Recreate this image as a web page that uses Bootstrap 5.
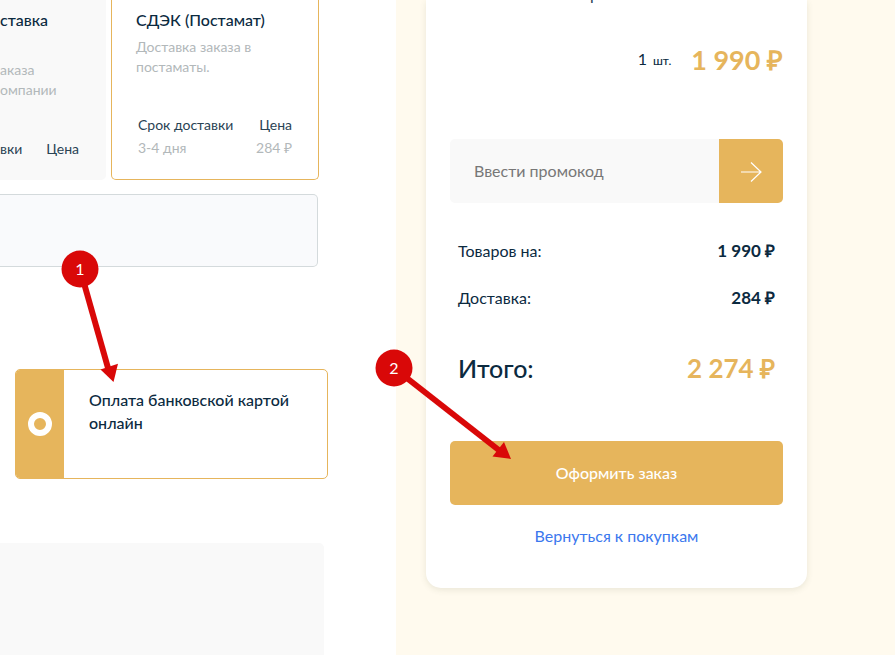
<!DOCTYPE html>
<html lang="ru">
<head>
<meta charset="utf-8">
<meta name="viewport" content="width=device-width, initial-scale=1">
<title>Оформление заказа</title>
<link href="https://cdn.jsdelivr.net/npm/bootstrap@5.3.0/dist/css/bootstrap.min.css" rel="stylesheet">
<style>
  :root { --gold: #e6b55c; --navy: #0b2a3f; --soft: #f9f9f9; }
  body { font-family: Lato, "Open Sans", sans-serif; color: var(--navy); font-size: 16px; line-height: 24px; background: #fff; }
  .checkout { display: grid; grid-template-columns: 396fr 499fr; min-height: 100vh; }
  .steps { min-width: 0; padding-right: 68px; }
  .delivery { margin-right: 9px; gap: 5px; }
  .option { height: 180px; padding: 8px 27px 0 0; border-radius: 0 0 5px 0; background: var(--soft); }
  .option.chosen { flex: 0 0 208px; background: #fff; border: 1px solid var(--gold); border-top: 0; border-radius: 0 0 5px 5px; padding: 8px 24px; }
  .option h2 { font-size: 16px; line-height: 24px; font-weight: 500; white-space: nowrap; }
  .option p { font-size: 14px; line-height: 20px; color: #b2b8ba; margin: 5px 0 0; }
  .option .lower { margin-top: 28px; }
  .terms { font-size: 14px; line-height: 23px; }
  .chosen .terms { padding: 0 2px; }
  .terms dt { font-weight: 400; color: #2a4354; }
  .terms dd { color: #b2b8ba; margin: 0; }
  .note-box { height: 73px; margin: 14px 10px 0 0; border: 1px solid #d4dadc; border-left: 0; border-radius: 0 5px 5px 0; background: #f9fafc; }
  .payment { margin: 102px 0 0 15px; height: 110px; border: 1px solid var(--gold); border-radius: 5px; cursor: pointer; }
  .payment-side { flex: 0 0 48px; background: var(--gold); }
  .payment input { appearance: none; width: 24px; height: 24px; margin: 0; border-radius: 50%; border: 6px solid #fff; background: var(--gold); }
  .payment-name { padding: 18px 25px; font-size: 16px; line-height: 23px; font-weight: 500; }
  .extra { margin: 64px 4px 0 0; border-radius: 0 5px 0 0; background: var(--soft); }
  .summary-side { background: #fffaee; padding: 0 88px 66px 30px; }
  .summary { background: #fff; border-radius: 0 0 15px 15px; box-shadow: 0 2px 6px rgba(80,90,60,.12); padding: 0 24px 40px; }
  .item-name { height: 24px; margin-top: -16px; padding-right: 44px; line-height: 20px; font-size: 16px; color: #2a4354; }
  .item-row { height: 36px; margin-top: 34px; gap: 20px; }
  .unit { font-size: 12px; font-weight: 500; margin-left: 6px; }
  .price { font-size: 26px; line-height: 36px; font-weight: 700; color: var(--gold); }
  .item-row .price { font-size: 27px; }
  .promo { height: 64px; margin-top: 61px; }
  .promo input { border: 0; background: var(--soft); padding: 0 24px; font-size: 16px; border-radius: 5px 0 0 5px; color: var(--navy); }
  .promo input::placeholder { color: #777; }
  .promo .btn { width: 64px; padding: 0; border-radius: 0 5px 5px 0; }
  .btn-gold, .btn-gold:hover { background: var(--gold); color: #fff; border: 0; }
  .totals { margin: 36px 8px 0; }
  .totals dt { font-weight: 400; }
  .totals dd { margin: 0; font-weight: 700; }
  .line { line-height: 24px; margin-bottom: 23px; }
  .line dd { font-size: 17px; }
  .line-total { margin-top: 40px; line-height: 36px; }
  .line-total dt { font-size: 25px; font-weight: 500; }
  .submit { height: 64px; margin-top: 55px; font-size: 16px; font-weight: 500; border-radius: 5px; }
  .back { margin-top: 19px; color: #3b78ee; text-decoration: none; }
  .pointers { left: 0; top: 0; pointer-events: none; }
  .pointers text { font: 16px Lato, sans-serif; fill: #fff; text-anchor: middle; }
</style>
<script src="https://cdn.jsdelivr.net/npm/bootstrap@5.3.0/dist/js/bootstrap.bundle.min.js" defer></script>
</head>
<body>
<div class="checkout position-relative overflow-hidden">
  <main class="steps d-flex flex-column">
    <div class="delivery d-flex">
      <section class="option flex-grow-1 d-flex flex-column">
        <h2 class="m-0">ставка</h2>
        <p class="lower">аказа<br>омпании</p>
        <dl class="terms d-flex justify-content-between mt-auto mb-3 pb-1">
          <dt>вки</dt>
          <dt>Цена</dt>
        </dl>
      </section>
      <section class="option chosen d-flex flex-column">
        <h2 class="m-0">СДЭК (Постамат)</h2>
        <p>Доставка заказа в постаматы.</p>
        <dl class="terms d-flex justify-content-between mt-auto mb-2 pb-1">
          <div><dt>Срок доставки</dt><dd>3-4 дня</dd></div>
          <div class="text-end"><dt>Цена</dt><dd>284 ₽</dd></div>
        </dl>
      </section>
    </div>
    <div class="note-box"></div>
    <label class="payment d-flex overflow-hidden" for="pay-card">
      <span class="payment-side d-flex align-items-center justify-content-center"><input type="radio" name="pay" id="pay-card" checked></span>
      <span class="payment-name">Оплата банковской картой онлайн</span>
    </label>
    <div class="extra flex-grow-1"></div>
  </main>

  <aside class="summary-side">
    <div class="summary overflow-hidden">
      <div class="item-name text-center">р</div>
      <div class="item-row d-flex align-items-center justify-content-end">
        <span>1<span class="unit">шт.</span></span>
        <span class="price">1 990 ₽</span>
      </div>
      <form class="promo d-flex">
        <input class="flex-grow-1 w-100" type="text" placeholder="Ввести промокод" aria-label="Ввести промокод">
        <button class="btn btn-gold flex-shrink-0" type="button" aria-label="Применить">
          <svg width="22" height="22" viewBox="0 0 22 22" fill="none" stroke="#fff" stroke-width="1.2"><path d="M1 11H21M11 1.500L21 11L11 20.500"/></svg>
        </button>
      </form>
      <dl class="totals">
        <div class="line d-flex justify-content-between"><dt>Товаров на:</dt><dd>1 990 ₽</dd></div>
        <div class="line d-flex justify-content-between"><dt>Доставка:</dt><dd>284 ₽</dd></div>
        <div class="line-total d-flex justify-content-between"><dt>Итого:</dt><dd class="price">2 274 ₽</dd></div>
      </dl>
      <button class="submit btn btn-gold w-100" type="button">Оформить заказ</button>
      <div class="text-center"><a class="back d-inline-block" href="#">Вернуться к покупкам</a></div>
    </div>
  </aside>

  <svg class="pointers position-absolute" width="520" height="480" viewBox="0 0 520 480" aria-hidden="true">
    <g fill="#d90808" stroke="none">
      <path d="M80 269L108 368" stroke="#d90808" stroke-width="6"/>
      <path d="M113.500 382L100.500 369.500L118 363.800Z"/>
      <circle cx="80" cy="269" r="18.500"/>
      <path d="M394 368L500 451" stroke="#d90808" stroke-width="6"/>
      <path d="M511 459L492.500 456.500L504 442Z"/>
      <circle cx="394" cy="368" r="18.500"/>
    </g>
    <text x="80" y="275">1</text>
    <text x="394" y="374">2</text>
  </svg>
</div>
</body>
</html>
